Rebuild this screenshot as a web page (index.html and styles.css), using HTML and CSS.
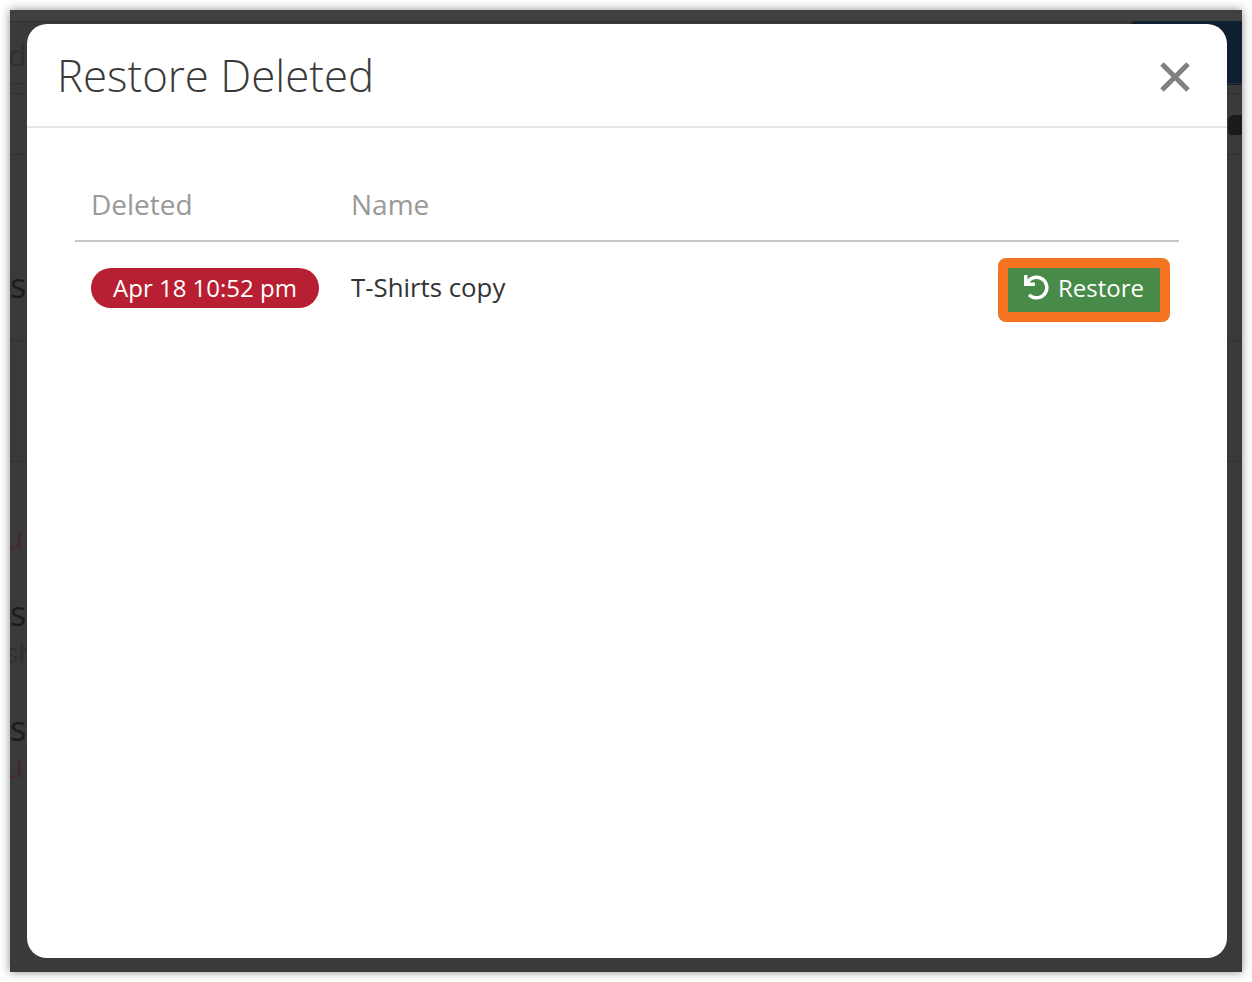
FILE: index.html
```html
<!DOCTYPE html>
<html lang="en">
<head>
<meta charset="utf-8">
<title>Restore Deleted</title>
<link rel="stylesheet" href="styles.css">
</head>
<body>
<div class="window">
  <div class="backdrop">
    <div class="bg-top"><span class="bg-nav"></span></div>
    <div class="bg-row bg-r1"><span class="bg-faint bg-d">d</span></div>
    <div class="bg-row bg-r1b"></div>
    <div class="bg-row bg-r2"></div>
    <div class="bg-row bg-r3"><span class="bg-dark">s</span></div>
    <div class="bg-row bg-r4"></div>
    <div class="bg-list">
      <span class="bg-red bg-l1">ul</span>
      <span class="bg-dark bg-l2">s</span>
      <span class="bg-faint bg-l3">sh</span>
      <span class="bg-dark bg-l4">s</span>
      <span class="bg-red bg-l5">ul</span>
    </div>
  </div>
  <span class="bg-avatar"></span>
  <section class="modal">
    <header class="modal-head">
      <h1 class="modal-title">Restore Deleted</h1>
      <svg class="close" viewBox="0 0 30 30" aria-label="Close">
        <path d="M2 2 L28 28 M28 2 L2 28"/>
      </svg>
    </header>
    <div class="modal-body">
      <div class="thead">
        <div class="col-date">Deleted</div>
        <div class="col-name">Name</div>
      </div>
      <div class="trow">
        <div class="col-date"><span class="pill">Apr 18 10:52 pm</span></div>
        <div class="col-name item">T-Shirts copy</div>
        <div class="col-action">
          <button class="restore">
            <svg class="restore-icon" viewBox="0 0 512 512">
              <path d="M212.333 224.333H12c-6.627 0-12-5.373-12-12V12C0 5.373 5.373 0 12 0h48c6.627 0 12 5.373 12 12v78.112C117.773 39.279 184.26 7.47 258.175 8.007c136.906.994 246.448 111.623 246.157 248.532C504.041 393.258 393.12 504 256.333 504c-64.089 0-122.496-24.313-166.51-64.215-5.099-4.622-5.334-12.554-.467-17.42l33.967-33.967c4.474-4.474 11.662-4.717 16.401-.525C170.76 415.336 211.58 432 256.333 432c97.268 0 176-78.716 176-176 0-97.267-78.716-176-176-176-58.496 0-110.28 28.476-142.274 72.333H212.333c6.627 0 12 5.373 12 12v48c0 6.627-5.373 12-12 12z"/>
            </svg>
            <span class="restore-label">Restore</span>
          </button>
        </div>
      </div>
    </div>
  </section>
</div>
</body>
</html>
```
FILE: styles.css
```css
* { box-sizing: border-box; }
html, body { margin: 0; background: #fff; }
body { height: 982px; padding: 10px; overflow: hidden; font-family: "Open Sans", "Noto Sans", sans-serif; }
.window {
  position: relative;
  width: 1232px;
  height: 962px;
  background: #3a3a3a;
  box-shadow: 0 0 9px rgba(0,0,0,.45);
  overflow: hidden;
}
.backdrop { display: flex; flex-direction: column; height: 100%; }
.bg-top { height: 12px; flex: none; background: #404040; border-bottom: 1px solid #333; display: flex; justify-content: flex-end; }
.bg-nav { width: 112px; height: 64px; margin-top: 11px; background: #0f1f30; border-radius: 6px 0 0 0; }
.bg-row { flex: none; border-bottom: 1px solid #303030; display: flex; align-items: center; color: #222; }
.bg-r1 { height: 62px; font-size: 30px; padding-top: 4px; }
.bg-d { margin-left: -2px; }
.bg-r1b { height: 10px; }
.bg-r2 { height: 61px; }
.bg-r3 { height: 186px; font-size: 34px; padding-top: 74px; }
.bg-r4 { height: 121px; background: #393939; }
.bg-faint { color: #303030; }
.bg-dark { color: #1c1c1c; }
.bg-red { color: #432a2c; }
.bg-list { display: flex; flex-direction: column; align-items: flex-start; font-size: 32px; line-height: 36px; padding-top: 57px; }
.bg-l1, .bg-l5 { margin-left: -6px; }
.bg-l2 { margin-top: 40px; font-size: 34px; }
.bg-l3 { margin-top: 3px; margin-left: -5px; font-size: 28px; }
.bg-l4 { margin-top: 40px; font-size: 34px; }
.bg-l5 { margin-top: 2px; }
.bg-avatar {
  position: absolute;
  right: 0;
  top: 105px;
  width: 14px;
  height: 20px;
  background: #1b1b1b;
  border-radius: 6px 0 0 4px;
}

.modal {
  position: absolute;
  left: 17px;
  top: 14px;
  width: 1200px;
  height: 934px;
  background: #fff;
  border-radius: 20px;
  color: #333;
}
.modal-head {
  height: 104px;
  border-bottom: 2px solid #e5e5e5;
  padding: 0 37px 0 30px;
  display: flex;
  align-items: center;
  justify-content: space-between;
}
.modal-title { margin: 2px 0 0; font-size: 43.8px; font-weight: 300; line-height: 1; color: #3a3a3a; }
.close { width: 30px; height: 30px; margin-top: 4px; }
.close path { fill: none; stroke: #808080; stroke-width: 5; }
.modal-body { padding: 36px 48px 0; }
.thead, .trow { display: flex; align-items: center; }
.thead { height: 78px; padding-top: 4px; border-bottom: 2px solid #c6c6c6; font-size: 28px; color: #999; }
.col-date { width: 276px; padding-left: 16px; flex: none; }
.col-name { flex: 1; }
.trow { height: 96px; padding-bottom: 4px; }
.pill {
  display: block;
  width: 228px;
  height: 40px;
  border-radius: 20px;
  background: #b91f32;
  color: #fff;
  font-size: 24px;
  line-height: 39px;
  text-align: center;
  white-space: nowrap;
}
.item { font-size: 25.8px; color: #333; padding-bottom: 2px; }
.col-action { flex: none; padding-right: 9px; margin-top: 4px; }
.restore {
  display: flex;
  align-items: center;
  justify-content: center;
  gap: 9px;
  width: 172px;
  height: 64px;
  padding: 0 0 5px;
  background: #488a48;
  border: 10px solid #f47321;
  border-radius: 8px;
  color: #fff;
  font: 24px "Open Sans", sans-serif;
}
.restore-icon { width: 25px; height: 25px; fill: #fff; }
```
